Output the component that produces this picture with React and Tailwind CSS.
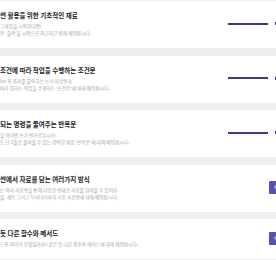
import { Plus } from 'lucide-react';

const courses = [
  {
    title: '썬 활용을 위한 기초적인 재료',
    lines: ['그래밍을 시작한다면!', "인 '출력'을 시작으로 차근차근 함께 배워봅시다."],
    kind: 'progress',
  },
  {
    title: '조건에 따라 작업을 수행하는 조건문',
    lines: ['lse 의 결과를 출력하는 논리 자료형과', "따라 원하는 작업을 수행하는 '조건문'에 대해 배워봅시다."],
    kind: 'progress',
  },
  {
    title: '되는 명령을 줄여주는 반복문',
    lines: ['을 여러번 쓰기 번거로우시죠!', "도 단 2줄로 줄여줄 수 있는 강력한 방법 '반복문'에 대해 배워봅시다."],
    kind: 'progress',
  },
  {
    title: '썬에서 자료를 담는 여러가지 방식',
    lines: ['는 여러 자료형을 통해 다양한 형태로 자료를 담아볼 수 있어요.', '플, 세트 그리고 딕셔너리까지 기초 자료형에 대해 배워봅시다.'],
    kind: 'button',
  },
  {
    title: '듯 다른 함수와 메서드',
    lines: ['드의 차이가 무엇일까요? 같은 듯 다른 함수와 메서드에 대해 배워봅시다.'],
    kind: 'button',
  },
];

const CourseCard = ({ course }) => {
  return (
    <div className="flex items-center w-[320px] shrink-0 bg-white pt-[9px] pb-[11px]">
      {/* Text */}
      <div className={course.kind === 'progress' ? 'w-[228px] shrink-0' : 'w-[269px] shrink-0'}>
        <h3 className="whitespace-nowrap text-[6.5px] leading-[10px] font-bold text-[#222]">{course.title}</h3>
        <div className="mt-[3px]">
          {course.lines.map((line) => (
            <p key={line} className="whitespace-nowrap text-[4.7px] leading-[7px] text-[#a3a3a3]">{line}</p>
          ))}
        </div>
      </div>

      {/* Right side */}
      {course.kind === 'progress' ? (
        <div className="flex items-center">
          <div className="w-[40px] h-[2px] bg-[#3c3c8c]" />
          <div className="ml-[7px] w-[4px] h-[3px] bg-[#3c3c8c]" />
        </div>
      ) : (
        <button className="flex items-center w-[24px] h-[13px] bg-[#5752ad] rounded-[1px] pl-[4px]">
          <Plus size={6} strokeWidth={3} className="text-white" />
        </button>
      )}
    </div>
  );
};

export default function App() {
  return (
    <div
      className="w-[276px] h-[260px] overflow-hidden bg-[#efeff1] pt-px flex flex-col gap-[7.5px]"
      style={{ fontFamily: '"Noto Sans CJK KR", "Noto Sans", sans-serif' }}
    >
      {courses.map((course) => (
        <CourseCard key={course.title} course={course} />
      ))}
    </div>
  );
}
